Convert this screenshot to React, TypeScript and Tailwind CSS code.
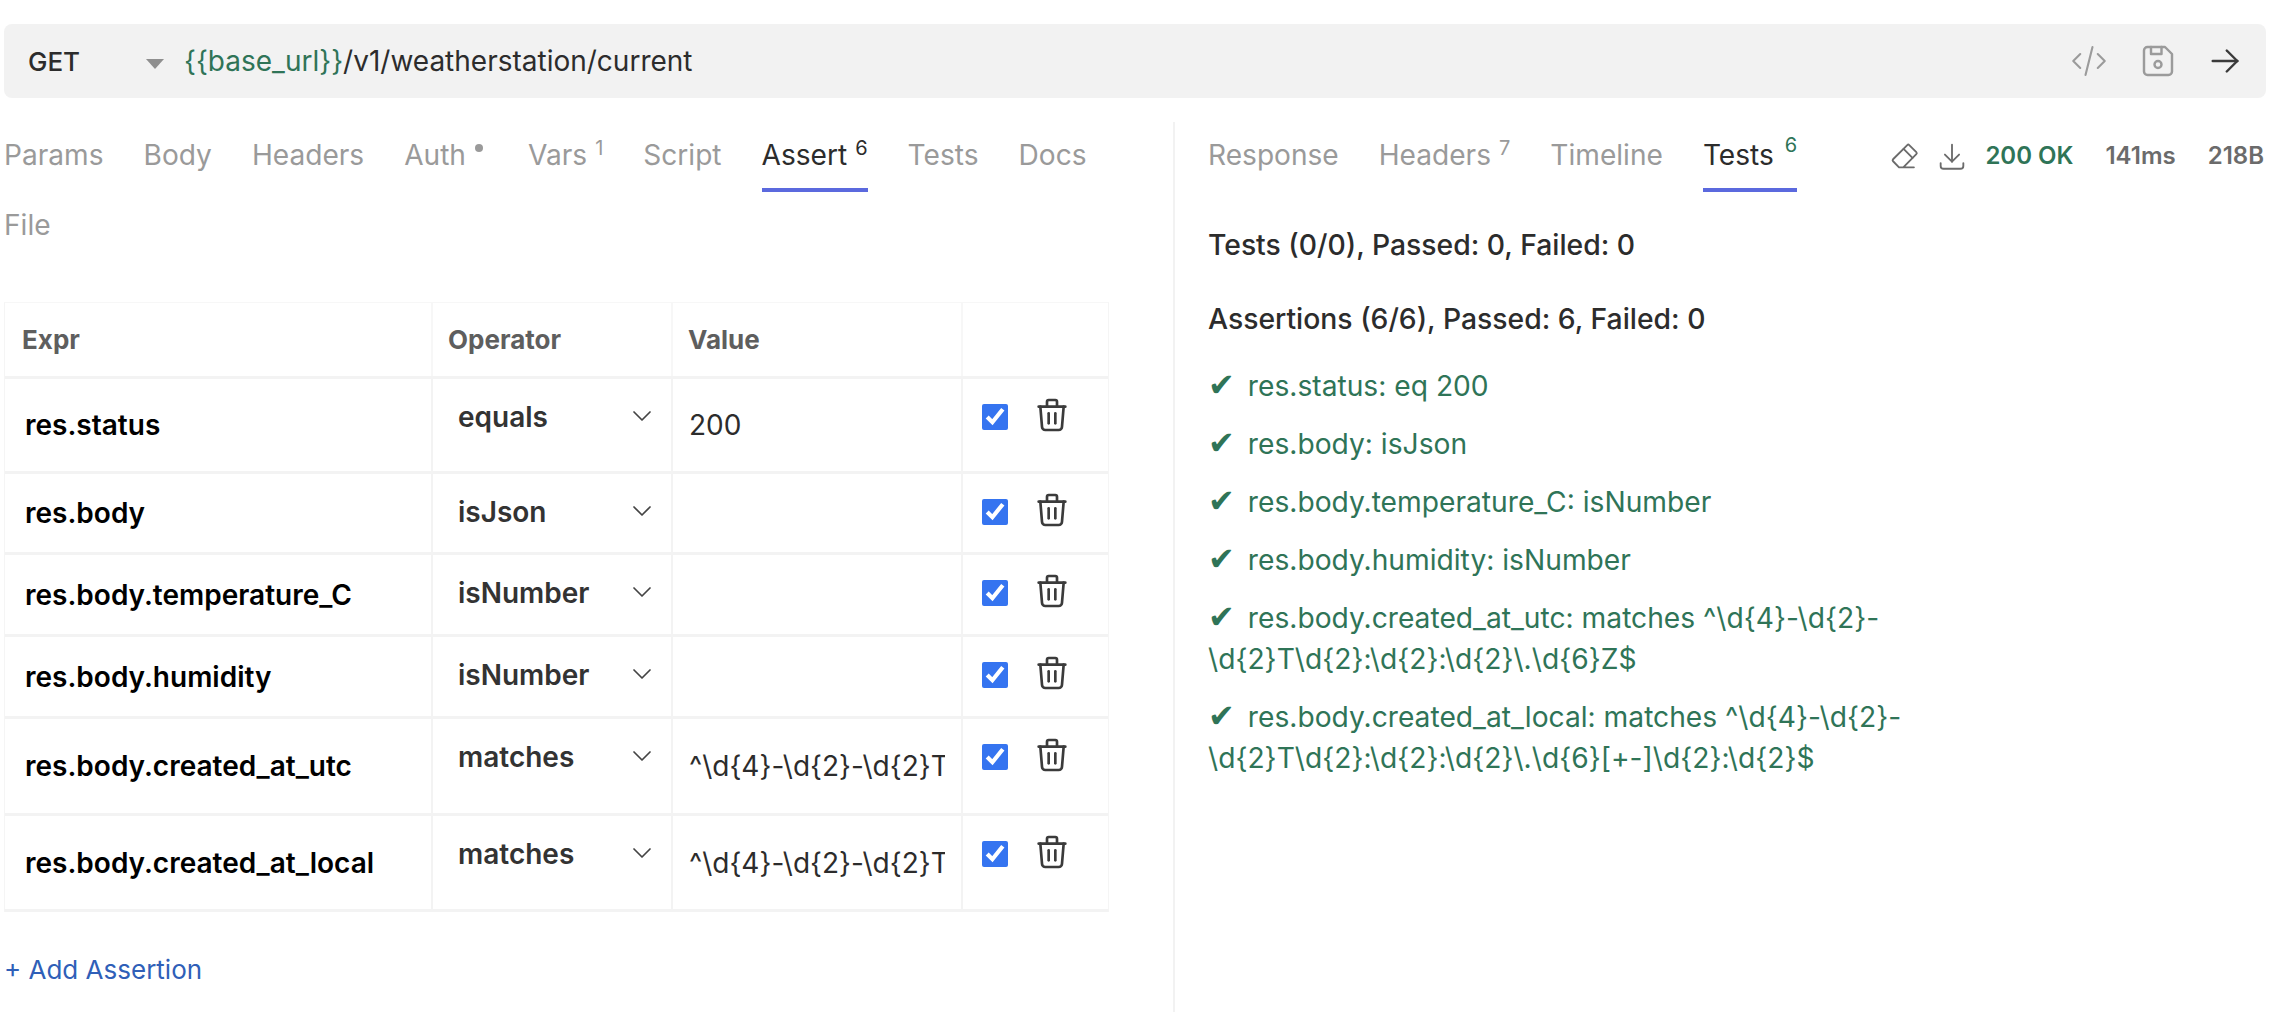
import { TbArrowRight, TbCode, TbDeviceFloppy, TbDownload, TbEraser, TbTrash, TbChevronDown } from "react-icons/tb";

const reqTabs = [
  { name: "Params" },
  { name: "Body" },
  { name: "Headers" },
  { name: "Auth", dot: true },
  { name: "Vars", sup: "1" },
  { name: "Script" },
  { name: "Assert", sup: "6", active: true },
  { name: "Tests" },
  { name: "Docs" },
  { name: "File" },
];

const resTabs = [
  { name: "Response" },
  { name: "Headers", sup: "7" },
  { name: "Timeline" },
  { name: "Tests", sup: "6", green: true, active: true },
];

const regex = "^\\d{4}-\\d{2}-\\d{2}T\\d{2}:\\d{2}:\\d{2}\\.\\d{6}Z$";

const rows = [
  { expr: "res.status", op: "equals", value: "200", h: "h-[95px]" },
  { expr: "res.body", op: "isJson", value: "", h: "h-[81px]" },
  { expr: "res.body.temperature_C", op: "isNumber", value: "", h: "h-[82px]" },
  { expr: "res.body.humidity", op: "isNumber", value: "", h: "h-[82px]" },
  { expr: "res.body.created_at_utc", op: "matches", value: regex, h: "h-[97px]" },
  { expr: "res.body.created_at_local", op: "matches", value: regex, h: "h-[96px]" },
];

const results = [
  "res.status: eq 200",
  "res.body: isJson",
  "res.body.temperature_C: isNumber",
  "res.body.humidity: isNumber",
  "res.body.created_at_utc: matches ^\\d{4}-\\d{2}-\\d{2}T\\d{2}:\\d{2}:\\d{2}\\.\\d{6}Z$",
  "res.body.created_at_local: matches ^\\d{4}-\\d{2}-\\d{2}T\\d{2}:\\d{2}:\\d{2}\\.\\d{6}[+-]\\d{2}:\\d{2}$",
];

function Tab({ tab }: { tab: { name: string; sup?: string; dot?: boolean; active?: boolean; green?: boolean } }) {
  return (
    <div className={`flex h-[70px] items-center border-b-4 text-[28.1px] ${tab.active ? "border-[#5b69de] text-[#2c2c2c]" : "border-transparent text-[#9a9a9a]"}`}>
      <span>{tab.name}</span>
      {tab.sup && (
        <sup className={`text-[20px] ${tab.green ? "-top-[10px] ml-[11px] text-[#2f7457]" : "-top-[7px] ml-[8px]"}`}>{tab.sup}</sup>
      )}
      {tab.dot && <span className="mr-[5px] ml-[9px] -mt-[14px] h-[8px] w-[8px] rounded-full bg-[#9a9a9a]" />}
    </div>
  );
}

export default function App() {
  return (
    <div className="h-[1012px] w-[2278px] overflow-hidden bg-white pt-[24px] font-['Inter',sans-serif] text-[28px] text-[#2c2c2c]">
      <div className="ml-[4px] flex h-[74px] w-[2262px] items-center rounded-[8px] bg-[#f2f2f2] pl-[24px] pr-[20px]">
        <span className="w-[118px] text-[26px] font-medium">GET</span>
        <span className="mt-[6px] h-0 w-0 border-x-[9px] border-t-[10px] border-x-transparent border-t-[#8f8f8f]" />
        <div className="ml-[20px] flex-1">
          <span className="text-[#2f7457]">{"{{base_url}}"}</span>/v1/weatherstation/current
        </div>
        <TbCode className="text-[#9b9b9b]" size={42} strokeWidth={1.2} />
        <TbDeviceFloppy className="ml-[27px] text-[#9b9b9b]" size={42} strokeWidth={1.4} />
        <TbArrowRight className="ml-[25px] text-[#3b3b3b]" size={42} strokeWidth={1.4} />
      </div>

      <div className="flex h-[914px]">
        <section className="mt-[24px] w-[1173px] pl-[4px]">
          <div className="flex w-[1130px] flex-wrap gap-x-[40px]">
            {reqTabs.map((t) => (
              <Tab key={t.name} tab={t} />
            ))}
          </div>

          <div className="mt-[40px] w-[1105px] border-x border-t border-b-[3px] border-x-[#f5f5f5] border-t-[#f7f7f7] border-b-[#f3f3f3]">
            <div className="grid h-[73px] grid-cols-[428px_240px_290px_1fr] text-[26px] font-bold text-[#5e5e5e]">
              <div className="flex items-center border-r-2 border-[#f7f7f7] pl-[17px]">Expr</div>
              <div className="flex items-center border-r-2 border-[#f7f7f7] pl-[15px]">Operator</div>
              <div className="flex items-center border-r-2 border-[#f7f7f7] pl-[15px]">Value</div>
              <div />
            </div>
            {rows.map((r) => (
              <div key={r.expr} className={`grid grid-cols-[428px_240px_290px_1fr] border-t-[3px] border-[#f3f3f3] ${r.h}`}>
                <div className="flex items-center border-r-2 border-[#f3f3f3] pl-[20px] font-semibold text-black">{r.expr}</div>
                <div className="flex items-start justify-between border-r-2 border-[#f3f3f3] pl-[25px] pr-[13px] pt-[17px] font-semibold text-[#333333]">
                  <span>{r.op}</span>
                  <TbChevronDown className="mt-[4px] text-[#444444]" size={32} strokeWidth={1.3} />
                </div>
                <div className="flex items-center overflow-hidden border-r-2 border-[#f3f3f3] px-[16px]">
                  <span className="overflow-hidden whitespace-nowrap">{r.value}</span>
                </div>
                <div className="flex items-start pl-[19px] pt-[25px]">
                  <input type="checkbox" defaultChecked className="h-[26px] w-[26px] accent-[#3574f0]" />
                  <TbTrash className="-mt-[9px] ml-[24px] text-[#3b3b3b]" size={40} strokeWidth={1.6} />
                </div>
              </div>
            ))}
          </div>

          <div className="mt-[38px] text-[26px] text-[#2f5fb8]">+ Add Assertion</div>
        </section>

        <section className="mt-[24px] min-w-0 flex-1 border-l-2 border-[#f2f2f2] pl-[33px] pr-[14px]">
          <div className="flex items-center">
            <div className="flex gap-x-[40px]">
              {resTabs.map((t) => (
                <Tab key={t.name} tab={t} />
              ))}
            </div>
            <div className="-mt-[2px] ml-auto flex items-center text-[24px] font-semibold text-[#6b6b6b]">
              <TbEraser size={34} strokeWidth={1.3} />
              <TbDownload className="ml-[14px]" size={34} strokeWidth={1.3} />
              <span className="ml-[16px] text-[#2f7457]">200 OK</span>
              <span className="ml-[32px]">141ms</span>
              <span className="ml-[32px]">218B</span>
            </div>
          </div>
          <div className="mt-[32px] text-[28.3px] font-medium">Tests (0/0), Passed: 0, Failed: 0</div>
          <div className="mt-[32px] text-[28.3px] font-medium">Assertions (6/6), Passed: 6, Failed: 0</div>
          <ul className="mt-[25px] flex w-[720px] flex-col gap-y-[17px] text-[28.2px] leading-[41px] text-[#2f7457]">
            {results.map((r) => (
              <li key={r} className="break-words">
                <span className="mr-[13px] font-['DejaVu_Sans',sans-serif] text-[32px] leading-[0]">✔</span>
                {r}
              </li>
            ))}
          </ul>
        </section>
      </div>
    </div>
  );
}
